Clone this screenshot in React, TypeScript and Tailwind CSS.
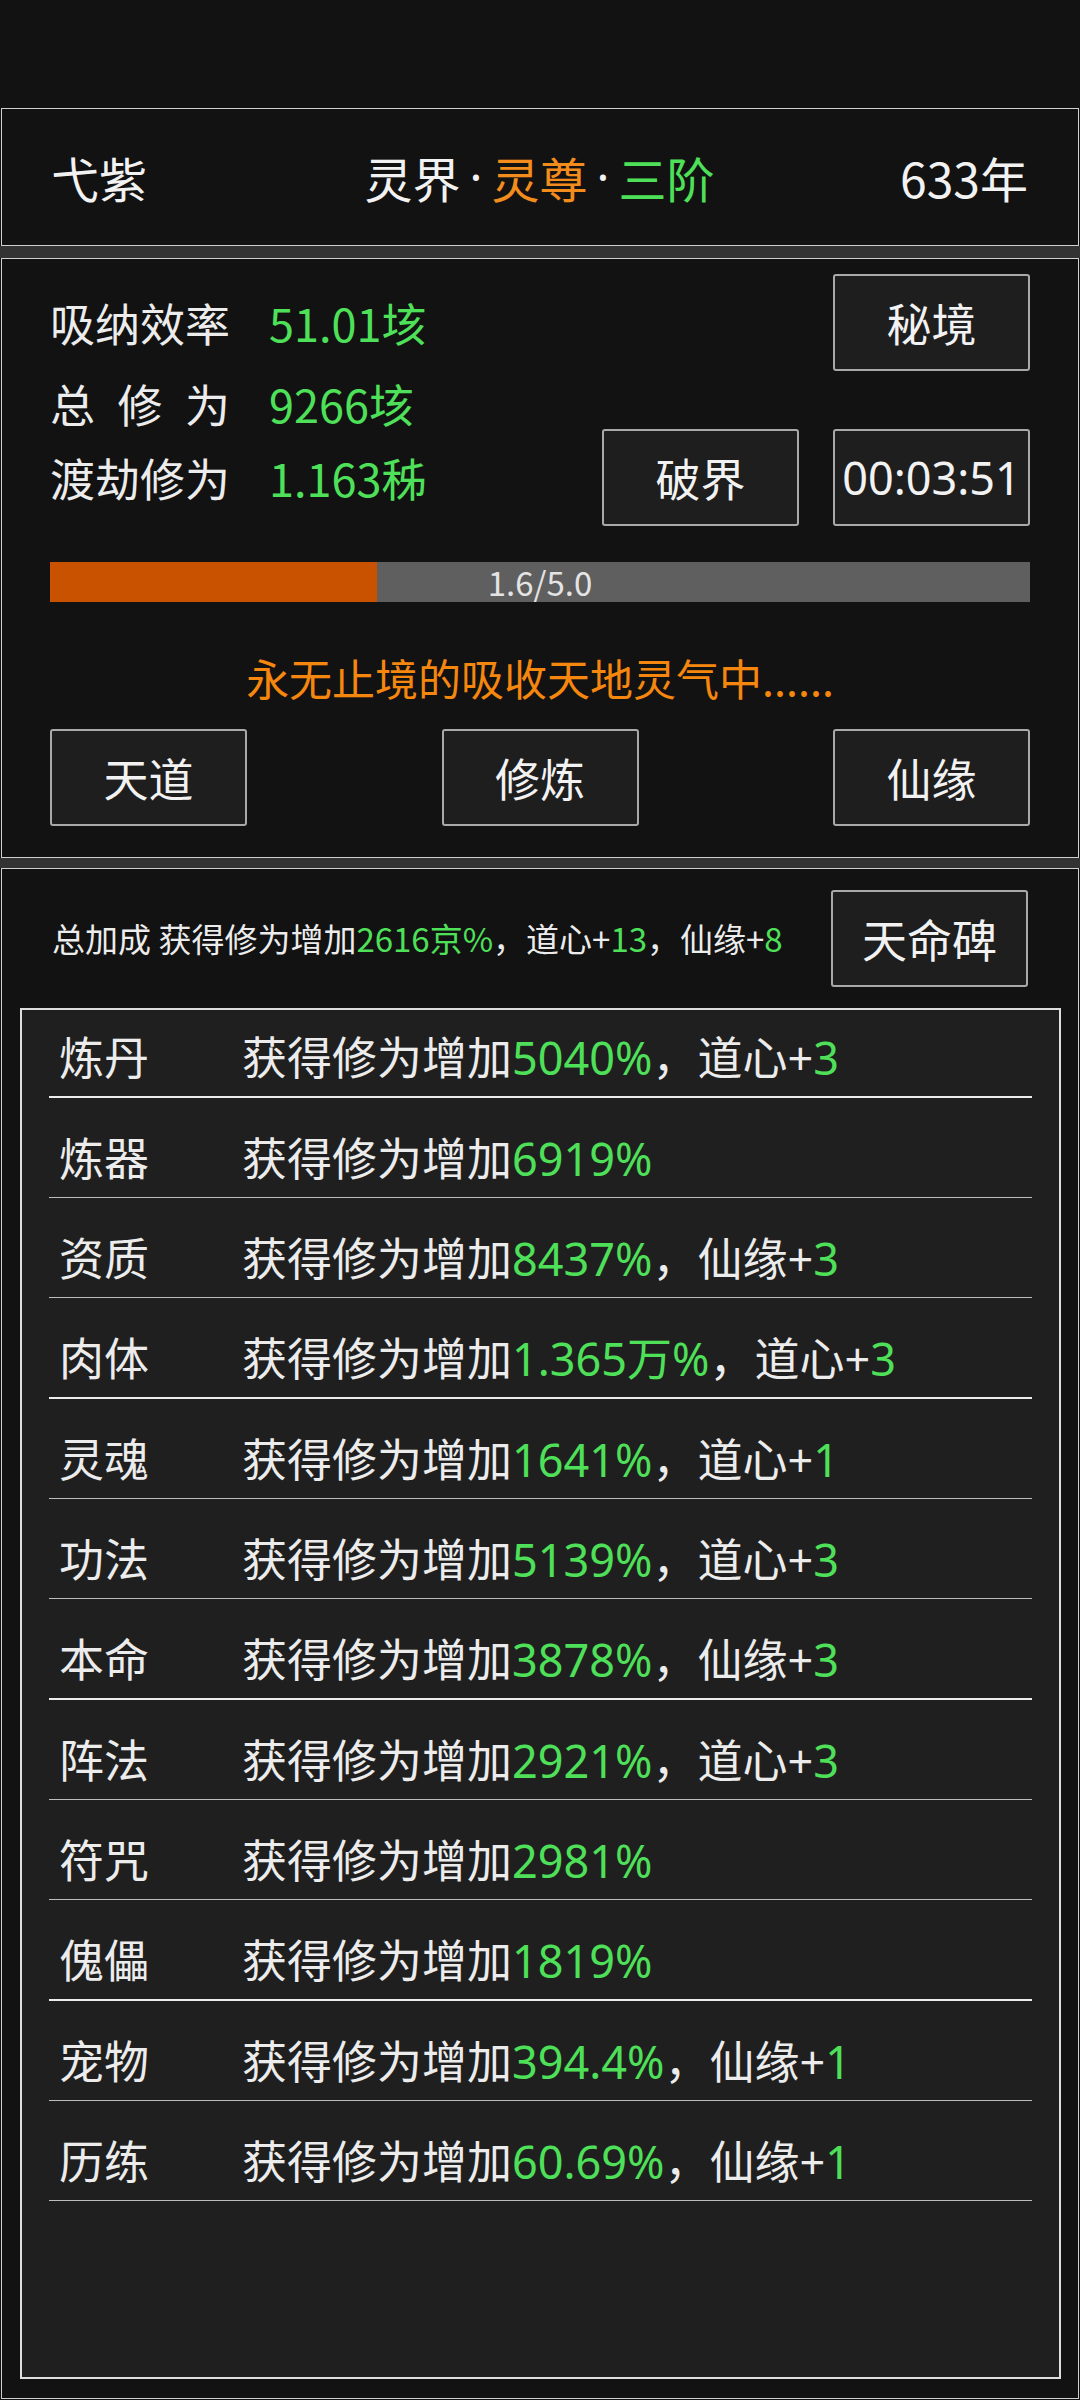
import React from "react"

const CJK = "font-['Noto_Sans_CJK_SC',sans-serif]"
const LATIN = "font-['Noto_Sans','Noto_Sans_CJK_SC',sans-serif]"

type Row = {
  name: string
  value: string
  extra?: { label: string; amount: string }
  thick?: boolean
}

const rows: Row[] = [
  { name: "炼丹", value: "5040%", extra: { label: "道心+", amount: "3" }, thick: true },
  { name: "炼器", value: "6919%" },
  { name: "资质", value: "8437%", extra: { label: "仙缘+", amount: "3" } },
  { name: "肉体", value: "1.365万%", extra: { label: "道心+", amount: "3" }, thick: true },
  { name: "灵魂", value: "1641%", extra: { label: "道心+", amount: "1" } },
  { name: "功法", value: "5139%", extra: { label: "道心+", amount: "3" } },
  { name: "本命", value: "3878%", extra: { label: "仙缘+", amount: "3" }, thick: true },
  { name: "阵法", value: "2921%", extra: { label: "道心+", amount: "3" } },
  { name: "符咒", value: "2981%" },
  { name: "傀儡", value: "1819%", thick: true },
  { name: "宠物", value: "394.4%", extra: { label: "仙缘+", amount: "1" } },
  { name: "历练", value: "60.69%", extra: { label: "仙缘+", amount: "1" } },
]

function GameButton({ children, font = CJK }: { children: React.ReactNode; font?: string }) {
  return (
    <button
      type="button"
      className={`flex h-[97px] w-[197px] items-center justify-center rounded-[3px] border-2 border-[#a9a9a9] bg-[#1e1e1e] text-[45px] leading-none text-[#f2f2f2] ${font}`}
    >
      {children}
    </button>
  )
}

function StatLine({ label, value, spread }: { label: string; value: string; spread?: boolean }) {
  return (
    <div className="flex items-center text-[45px] leading-[54px]">
      <span className="w-[219px] text-[#ececec]">
        {spread ? (
          <span className="flex w-[180px] justify-between">
            {label.split("").map((c) => (
              <span key={c}>{c}</span>
            ))}
          </span>
        ) : (
          label
        )}
      </span>
      <span className="text-[#4fe05a]">{value}</span>
    </div>
  )
}

function Dot() {
  return <span className={`inline-block w-[31px] text-center ${LATIN}`}>·</span>
}

export default function App() {
  return (
    <div className={`flex h-[2400px] w-[1080px] flex-col bg-[#121212] ${CJK}`}>
      <div className="h-[108px] shrink-0" />

      {/* header */}
      <header className="mx-px grid h-[138px] shrink-0 grid-cols-[1fr_auto_1fr] items-center border border-[#cfcfcf] pl-[49px] pr-[50px] text-[48px] leading-none text-[#f2f2f2]">
        <span>弋紫</span>
        <span className="flex items-center">
          灵界
          <Dot />
          <span className="text-[#f28c1c]">灵尊</span>
          <Dot />
          <span className="text-[#4fe05a]">三阶</span>
        </span>
        <span className="text-right">633年</span>
      </header>

      <div className="h-[12px] shrink-0 bg-[#333333]" />

      {/* cultivation panel */}
      <section className="mx-px flex h-[600px] shrink-0 flex-col border border-[#cfcfcf] px-[48px] pt-[15px]">
        <div className="flex justify-between">
          <div className="flex flex-col">
            <div className="flex h-[97px] items-center">
              <StatLine label="吸纳效率" value="51.01垓" />
            </div>
            <div className="flex h-[58px] items-center pt-2">
              <StatLine label="总修为" value="9266垓" spread />
            </div>
            <div className="flex h-[97px] items-center">
              <StatLine label="渡劫修为" value="1.163秭" />
            </div>
          </div>
          <div className="grid grid-cols-[197px_197px] grid-rows-[97px_97px] gap-x-[34px] gap-y-[58px]">
            <div />
            <GameButton>秘境</GameButton>
            <GameButton>破界</GameButton>
            <GameButton font={`${LATIN} text-[43px]`}>00:03:51</GameButton>
          </div>
        </div>

        <div className="relative mt-[36px] flex h-[40px] w-full bg-[#5f5f5f]">
          <div className="h-full w-[33.4%] bg-[#c85200]" />
          <span className="absolute inset-0 flex items-center justify-center text-[33px] leading-none text-[#e4e4e4]">
            1.6/5.0
          </span>
        </div>

        <p className="mt-[50px] h-[50px] text-center text-[43px] leading-[50px] text-[#f5870f]">
          永无止境的吸收天地灵气中......
        </p>

        <div className="mt-[27px] flex justify-between">
          <GameButton>天道</GameButton>
          <GameButton>修炼</GameButton>
          <GameButton>仙缘</GameButton>
        </div>
      </section>

      <div className="h-[10px] shrink-0 bg-[#333333]" />

      {/* bonus panel */}
      <section className="mx-px mb-px flex flex-1 flex-col border border-[#cfcfcf] pt-[21px]">
        <div className="flex items-center justify-between px-[50px]">
          <p className="text-[33px] leading-none text-[#ececec]">
            总加成 获得修为增加<span className="text-[#4fe05a]">2616京%</span>，道心+
            <span className="text-[#4fe05a]">13</span>，仙缘+<span className="text-[#4fe05a]">8</span>
          </p>
          <GameButton>天命碑</GameButton>
        </div>

        <div className="mb-[19px] ml-[18px] mr-[17px] mt-[21px] flex-1 border-2 border-[#dedede] bg-[#1f1f1f] px-[27px]">
          {rows.map((row, i) => (
            <div key={row.name}>
              <div
                className={`flex pb-[15px] pl-[10px] text-[45px] leading-[46px] text-[#ececec] ${LATIN} ${
                  i === 0 ? "pt-[25px]" : "pt-[38px]"
                }`}
              >
                <span className="w-[183px]">{row.name}</span>
                <span>
                  获得修为增加<span className="text-[#4fe05a]">{row.value}</span>
                  {row.extra && (
                    <>
                      ，{row.extra.label}
                      <span className="text-[#4fe05a]">{row.extra.amount}</span>
                    </>
                  )}
                </span>
              </div>
              <div className={row.thick ? "h-[2px] bg-[#ececec]" : "h-px bg-[#bdbdbd]"} />
            </div>
          ))}
        </div>
      </section>
    </div>
  )
}
